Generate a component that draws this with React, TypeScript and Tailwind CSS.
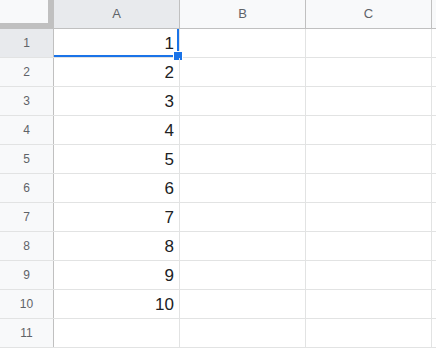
const cols = ["A", "B", "C"];
const rows = Array.from({ length: 11 }, (_, i) => i + 1);

const font = "font-['Liberation_Sans',Arial,sans-serif]";

export default function App() {
  return (
    <div className={`w-[436px] h-[348px] overflow-hidden bg-white ${font}`}>
      {/* column headers */}
      <div className="flex h-[29px] border-b border-[#c0c0c0] bg-[#f8f9fa]">
        <div className="relative w-[54px] shrink-0 border-r border-[#c0c0c0]">
          <div className="absolute right-0 top-0 h-[27px] w-[5px] bg-[#c0c0c0]" />
          <div className="absolute bottom-0 left-0 h-[5px] w-[53px] bg-[#c0c0c0]" />
        </div>
        {cols.map((c, i) => (
          <div
            key={c}
            className={`flex w-[126px] shrink-0 items-center justify-center border-r border-[#c0c0c0] text-[13px] text-[#5f6368] ${
              i === 0 ? "bg-[#e8eaed]" : ""
            }`}
          >
            {c}
          </div>
        ))}
        <div className="flex-1" />
      </div>

      {rows.map((r) => (
        <div key={r} className="flex h-[29px] border-b border-[#e2e3e3]">
          <div
            className={`flex w-[54px] shrink-0 items-center justify-center border-r border-[#c0c0c0] text-[12px] text-[#5f6368] ${
              r === 1 ? "bg-[#e8eaed]" : "bg-[#f8f9fa]"
            }`}
          >
            {r}
          </div>
          <div className="relative flex w-[126px] shrink-0 items-center justify-end border-r border-[#e2e3e3] pr-[5px] pt-[1px] text-[17px] text-[#202124]">
            {r <= 10 ? r : ""}
            {r === 1 && (
              <>
                <div className="absolute right-0 top-0 h-[28px] w-[2px] bg-[#1a73e8]" />
                <div className="absolute bottom-0 left-0 h-[2px] w-[125px] bg-[#1a73e8]" />
                <div className="absolute -bottom-[4px] -right-[4px] h-[10px] w-[10px] border border-white bg-[#1a73e8]" />
              </>
            )}
          </div>
          <div className="w-[126px] shrink-0 border-r border-[#e2e3e3]" />
          <div className="w-[126px] shrink-0 border-r border-[#e2e3e3]" />
          <div className="flex-1" />
        </div>
      ))}
    </div>
  );
}
